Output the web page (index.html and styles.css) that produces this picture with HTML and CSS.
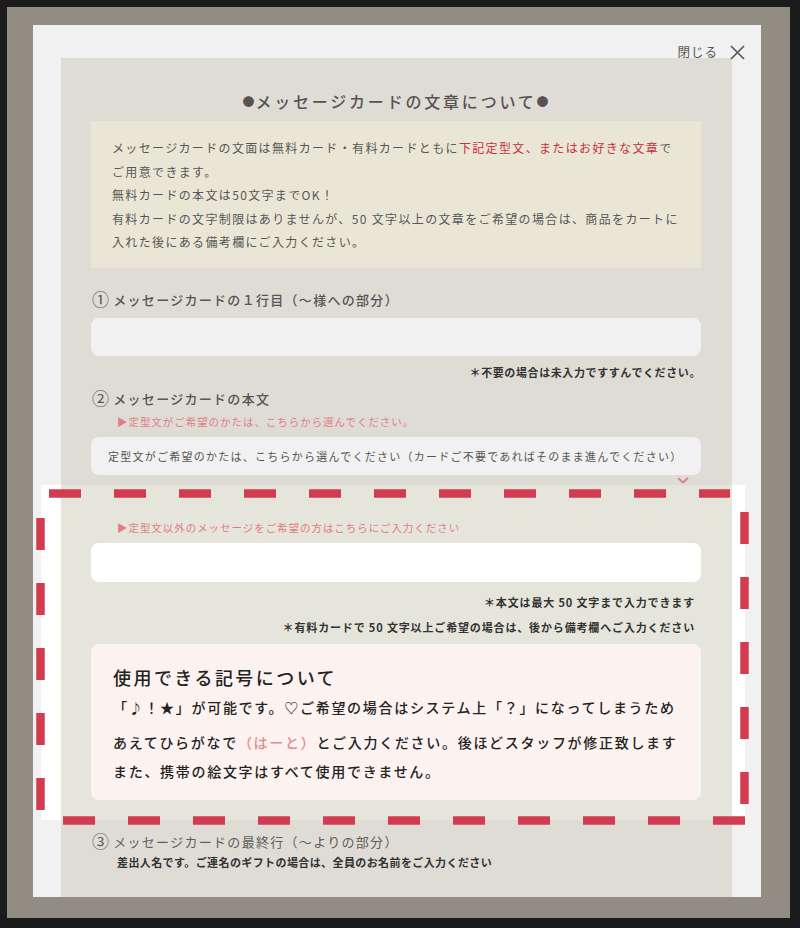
FILE: index.html
```html
<!DOCTYPE html>
<html lang="ja">
<head>
<meta charset="utf-8">
<title>メッセージカード</title>
<link rel="stylesheet" href="styles.css">
</head>
<body>
<div class="frame">
  <div class="modal">
    <div class="close">
      <span>閉じる</span>
      <svg class="x" width="15" height="15" viewBox="0 0 15 15"><path d="M1 1 L14 14 M14 1 L1 14" stroke="#555" stroke-width="1.6" fill="none"/></svg>
    </div>
    <div class="inner">
      <h2 class="title"><span class="dot">●</span>メッセージカードの文章について<span class="dot">●</span></h2>
      <div class="info">
        <p>メッセージカードの文面は無料カード・有料カードともに<span class="red">下記定型文、またはお好きな文章</span>で</p>
        <p>ご用意できます。</p>
        <p>無料カードの本文は50文字までOK！</p>
        <p>有料カードの文字制限はありませんが、50 文字以上の文章をご希望の場合は、商品をカートに</p>
        <p>入れた後にある備考欄にご入力ください。</p>
      </div>
      <div class="label"><span class="num">①</span> メッセージカードの１行目（〜様への部分）</div>
      <div class="input"></div>
      <div class="note">＊不要の場合は未入力ですすんでください。</div>
      <div class="label label2"><span class="num">②</span> メッセージカードの本文</div>
      <div class="hint">▶定型文がご希望のかたは、こちらから選んでください。</div>
      <div class="select">定型文がご希望のかたは、こちらから選んでください（カードご不要であればそのまま進んでください）
        <svg class="chev" width="12" height="7" viewBox="0 0 12 7"><path d="M1 1 L6 5.5 L11 1" stroke="#e0808a" stroke-width="2" fill="none"/></svg>
      </div>
      <div class="highlight">
        <div class="hl-inner">
          <div class="hint hint2">▶定型文以外のメッセージをご希望の方はこちらにご入力ください</div>
          <div class="input white"></div>
          <div class="note note-a">＊本文は最大 50 文字まで入力できます</div>
          <div class="note note-b">＊有料カードで 50 文字以上ご希望の場合は、後から備考欄へご入力ください</div>
          <div class="pinkbox">
            <div class="pb-title">使用できる記号について</div>
            <p class="pb-l1">「♪！★」が可能です。♡ご希望の場合はシステム上「？」になってしまうため</p>
            <p class="pb-l2">あえてひらがなで<span class="pink">（はーと）</span>とご入力ください。後ほどスタッフが修正致します</p>
            <p class="pb-l3">また、携帯の絵文字はすべて使用できません。</p>
          </div>
        </div>
        <svg class="dashes" width="714" height="337" viewBox="0 0 714 337">
          <g stroke="#d33c50" stroke-width="8.5" stroke-dasharray="32 33" fill="none">
            <path d="M13 4.5 H694"/>
            <path d="M708.5 23 V315"/>
            <path d="M27 331.5 H709"/>
            <path d="M4.5 29 V321"/>
          </g>
        </svg>
      </div>
      <div class="label label3"><span class="num">③</span> メッセージカードの最終行（〜よりの部分）</div>
      <div class="sub">差出人名です。ご連名のギフトの場合は、全員のお名前をご入力ください</div>
    </div>
  </div>
</div>
</body>
</html>
```

FILE: styles.css
```css
html, body {
  margin: 0;
  padding: 0;
}
body {
  width: 800px;
  height: 928px;
  overflow: hidden;
  background: #1b1b1b;
  font-family: "Noto Sans CJK JP", "Noto Sans", sans-serif;
}
.frame {
  margin: 7px 10px 0 7px;
  height: 911px;
  box-sizing: border-box;
  background: #918d83;
  padding: 18px 29px 21px 26px;
}
.modal {
  position: relative;
  height: 872px;
  box-sizing: border-box;
  background: #f1f1f1;
  padding: 33px 29px 0 28px;
  display: flex;
  flex-direction: column;
}
.close {
  position: absolute;
  top: 19px;
  right: 16px;
  height: 16px;
  display: flex;
  align-items: center;
  gap: 12px;
  font-size: 12.5px;
  letter-spacing: 1px;
  color: #555;
  line-height: 16px;
}
.x {
  display: block;
}
.inner {
  flex: 1;
  background: #dedcd5;
  padding: 31px 31px 0 30px;
}
.title {
  margin: 0;
  height: 24px;
  text-align: center;
  font-size: 16px;
  letter-spacing: 2.8px;
  line-height: 24px;
  font-weight: 500;
  color: #5a5252;
}
.dot {
  font-size: 12px;
  letter-spacing: 1px;
  line-height: 1;
  vertical-align: 1px;
}
.info {
  margin-top: 8px;
  background: #e9e6d6;
  padding: 15px 20px 14.5px 21px;
  font-size: 12px;
  letter-spacing: 1.35px;
  line-height: 23.5px;
  color: #575757;
}
.info p {
  margin: 0;
  white-space: nowrap;
}
.red {
  color: #c8303f;
}
.label {
  margin-top: 22px;
  height: 20px;
  font-size: 13px;
  letter-spacing: 1.3px;
  line-height: 20px;
  font-weight: 500;
  color: #555;
  padding-left: 1px;
  white-space: nowrap;
}
.num {
  font-size: 17px;
  line-height: 1;
  letter-spacing: 0;
  font-weight: 400;
  vertical-align: -1px;
}
.label2 {
  margin-top: 9px;
}
.label3 {
  margin-top: 12px;
  font-weight: 400;
  color: #5e5e5e;
}
.input {
  margin-top: 8px;
  height: 38px;
  background: #f1f1f1;
  border-radius: 8px;
}
.input.white {
  margin-top: 7px;
  height: 39px;
  background: #ffffff;
}
.note {
  margin-top: 8px;
  height: 16px;
  text-align: right;
  font-size: 11px;
  letter-spacing: 0.6px;
  line-height: 16px;
  font-weight: 700;
  color: #333;
  white-space: nowrap;
}
.note-a {
  margin-top: 12px;
  padding-right: 6px;
  letter-spacing: 0.85px;
}
.note-b {
  margin-top: 9px;
  padding-right: 6px;
  letter-spacing: 0.85px;
}
.hint {
  margin-top: 5px;
  height: 16px;
  padding-left: 26px;
  font-size: 10.5px;
  letter-spacing: 0.95px;
  line-height: 16px;
  color: #e27c82;
  white-space: nowrap;
}
.hint2 {
  margin-top: 0;
}
.select {
  position: relative;
  margin-top: 7px;
  height: 38px;
  background: #f1f1f1;
  border-radius: 8px;
  padding-left: 17px;
  font-size: 11px;
  letter-spacing: 1.25px;
  line-height: 38px;
  color: #555;
  white-space: nowrap;
}
.chev {
  position: absolute;
  left: 586px;
  top: 40px;
  display: block;
}
.highlight {
  position: relative;
  margin: 10px -44px 0 -50px;
  padding: 0 13px 0 20px;
  background: #ffffff;
}
.hl-inner {
  background: #e6e5dc;
  padding: 35px 31px 20px 30px;
}
.dashes {
  position: absolute;
  left: -5px;
  top: 4px;
  display: block;
  pointer-events: none;
}
.pinkbox {
  margin-top: 9px;
  height: 156px;
  box-sizing: border-box;
  background: #fcf2f0;
  border-radius: 8px;
  padding: 20px 10px 0 22px;
  color: #222;
}
.pb-title {
  height: 26px;
  font-size: 18px;
  letter-spacing: 2.45px;
  line-height: 26px;
  font-weight: 500;
}
.pinkbox p {
  margin: 0;
  height: 24px;
  font-size: 14px;
  letter-spacing: 1.7px;
  line-height: 24px;
  font-weight: 500;
  white-space: nowrap;
}
.pb-l1 {
  margin-top: 5px !important;
}
.pb-l2 {
  margin-top: 11px !important;
}
.pb-l3 {
  margin-top: 5px !important;
}
.pink {
  color: #e8878d;
}
.sub {
  margin-top: 2px;
  padding-left: 26px;
  font-size: 11px;
  letter-spacing: 0.4px;
  line-height: 16px;
  font-weight: 700;
  color: #333;
  white-space: nowrap;
}
```
